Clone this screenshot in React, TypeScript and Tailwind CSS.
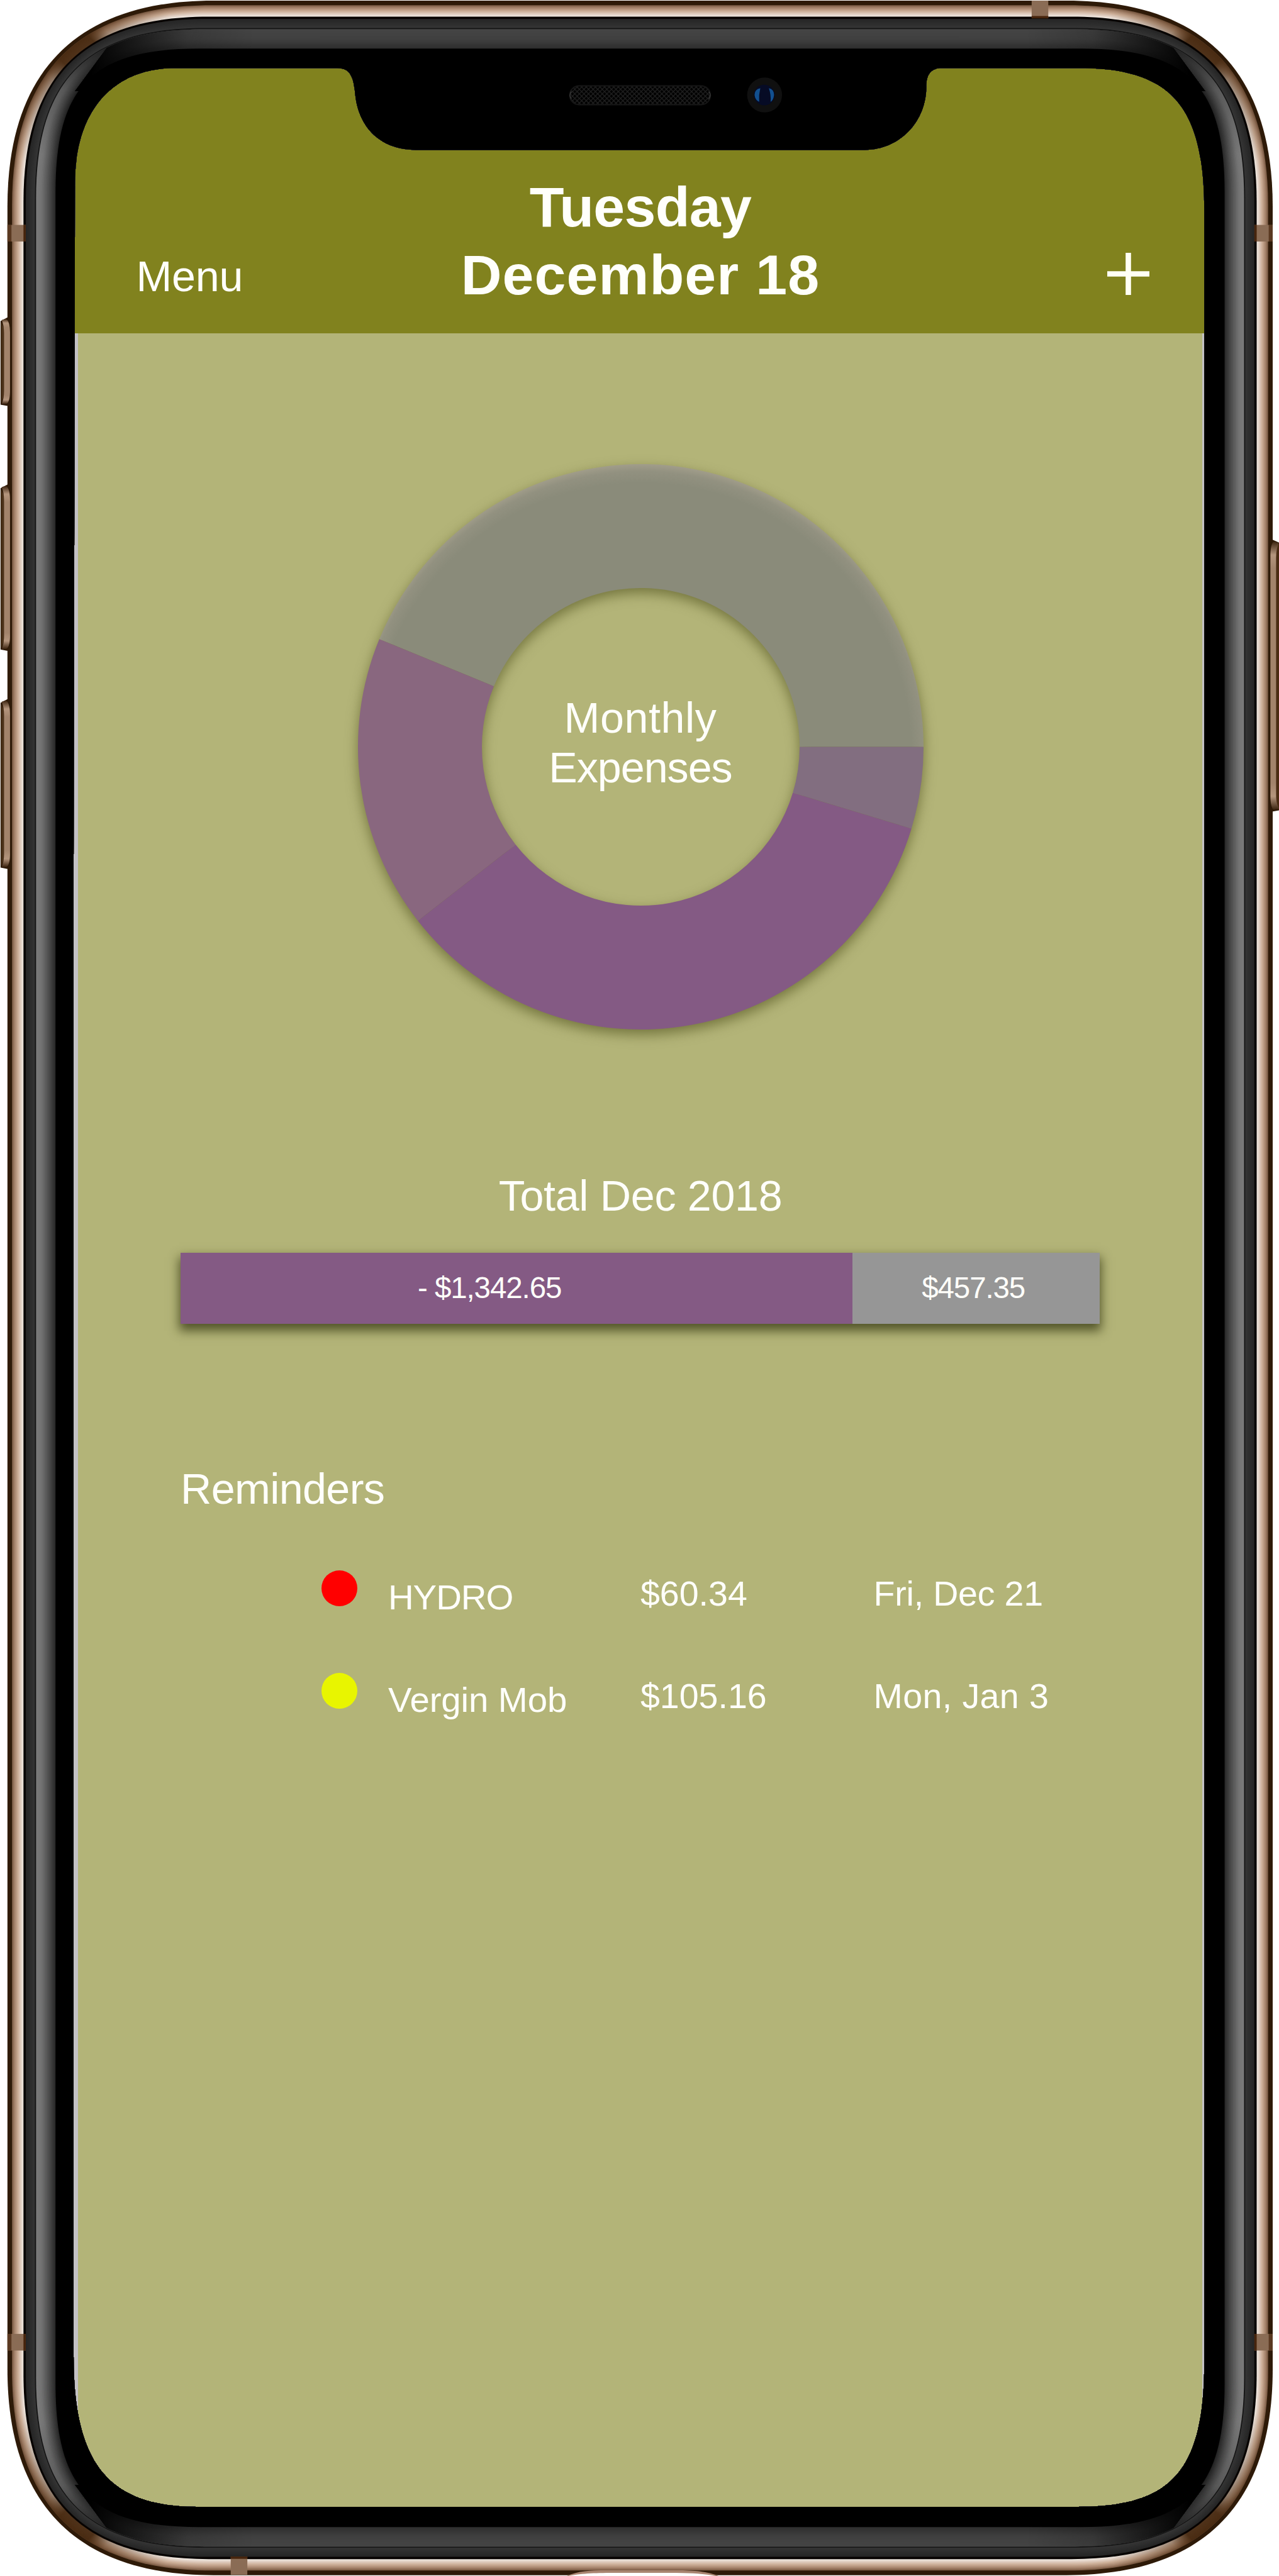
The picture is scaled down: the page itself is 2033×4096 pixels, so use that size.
import React from "react";

const FONT = "font-['Liberation_Sans',Arial,sans-serif]";

/* ---------- device frame geometry (drawn on a 2234 x 4501 canvas) ---------- */

const BOX = { l: 13, t: 1, r: 2223, b: 4499.5 };

function shell(d: number): string {
  const l = BOX.l + d;
  const t = BOX.t + d;
  const r = BOX.r - d;
  const b = BOX.b - d;
  const R = 360 - 1.3 * d;
  const k = (8 * (91 - 0.42 * d) - R) / 3;
  return (
    `M${l},${t + R} C${l},${t + k} ${l + k},${t} ${l + R},${t} ` +
    `H${r - R} C${r - k},${t} ${r},${t + k} ${r},${t + R} ` +
    `V${b - R} C${r},${b - k} ${r - k},${b} ${r - R},${b} ` +
    `H${l + R} C${l + k},${b} ${l},${b - k} ${l},${b - R} Z`
  );
}

type Stop = [number, number, number, number];

function ramp(stops: Stop[], step: number) {
  const out: { d: number; fill: string }[] = [];
  const end = stops[stops.length - 1][0];
  for (let d = stops[0][0]; d <= end; d += step) {
    let i = 0;
    while (i < stops.length - 2 && d > stops[i + 1][0]) i++;
    const a = stops[i];
    const b = stops[i + 1];
    const f = (d - a[0]) / (b[0] - a[0]);
    const c = [1, 2, 3].map((n) => Math.round(a[n] + (b[n] - a[n]) * f));
    out.push({ d, fill: `rgb(${c[0]},${c[1]},${c[2]})` });
  }
  return out;
}

const GOLD = ramp(
  [
    [8, 124, 92, 70],
    [12, 164, 130, 106],
    [18, 204, 174, 151],
    [23, 224, 206, 193],
    [27, 238, 231, 224],
  ],
  1,
);
const DARK = ramp(
  [
    [32, 38, 38, 38],
    [46, 52, 52, 52],
  ],
  2,
);
const SIDE = ramp(
  [
    [50, 122, 122, 122],
    [58, 116, 116, 116],
    [70, 82, 82, 82],
    [83, 40, 40, 40],
  ],
  1.5,
);
const CAP = ramp(
  [
    [50, 68, 68, 68],
    [66, 64, 64, 64],
    [83, 46, 46, 46],
  ],
  2,
);

const SCREEN =
  "M131,321 C131,190 200,119 306,119 H589 C612,119 617,135 620,160 C624,218 660,262 727,262 " +
  "H1510 C1572,262 1618,212 1618,152 C1618,130 1626,119 1645,119 H1886 C2050,119 2103.5,190 2103.5,370 " +
  "V4126 C2103.5,4320 2045,4380 1883,4380 H344 C196,4380 128.6,4312 128.6,4118 V1500 Z";

const CORNERS = [
  { id: "tl", x1: 13, y1: 340, x2: 366, y2: 0 },
  { id: "tr", x1: 2223, y1: 340, x2: 1870, y2: 0 },
  { id: "bl", x1: 13, y1: 4160, x2: 366, y2: 4500 },
  { id: "br", x1: 2223, y1: 4160, x2: 1870, y2: 4500 },
];
const QUADS = [
  { id: "tl", x: 0, y: 0 },
  { id: "tr", x: 1834, y: 0 },
  { id: "bl", x: 0, y: 4101 },
  { id: "br", x: 1834, y: 4101 },
];

function SideButton({ y, h }: { y: number; h: number }) {
  const e = y + h;
  return (
    <g>
      <path d={`M1,${y + 7} L14,${y} H20 V${e} H12 L1,${e - 2} Z`} fill="#2e1a08" />
      <path d={`M2,${y + 9} L7,${y + 20} V${e - 18} L2,${e - 4} Z`} fill="#4a3018" />
      <path
        d={`M3,${y + 5} L10,${y + 3} Q17,${y + 6} 17.5,${y + 26} V${e - 24} Q17,${e - 6} 11,${e - 3} L3,${e - 3} Q7,${e - 12} 7,${e - 26} V${y + 28} Q7,${y + 14} 3,${y + 5} Z`}
        fill="url(#btn)"
      />
    </g>
  );
}

function PhoneFrame() {
  return (
    <svg
      viewBox="0 0 2234 4501"
      preserveAspectRatio="none"
      className="pointer-events-none absolute inset-0 h-full w-full"
      aria-hidden="true"
    >
      <defs>
        <clipPath id="hole">
          <path clipRule="evenodd" d={`M0,0 H2234 V4501 H0 Z ${SCREEN}`} />
        </clipPath>
        <clipPath id="capTop">
          <path d="M212,48 L130,160 H2106 L2024,48 Z" />
        </clipPath>
        <clipPath id="capBottom">
          <path d="M212,4453 L130,4341 H2106 L2024,4453 Z" />
        </clipPath>
        {CORNERS.map((c) => (
          <linearGradient key={c.id} id={`g-${c.id}`} gradientUnits="userSpaceOnUse" x1={c.x1} y1={c.y1} x2={c.x2} y2={c.y2}>
            <stop offset="0.12" stopColor="#46280f" stopOpacity="0" />
            <stop offset="0.4" stopColor="#46280f" stopOpacity="0.55" />
            <stop offset="0.47" stopColor="#46280f" stopOpacity="0.95" />
            <stop offset="0.6" stopColor="#46280f" stopOpacity="0.95" />
            <stop offset="0.66" stopColor="#5a381c" stopOpacity="0.5" />
            <stop offset="0.86" stopColor="#5a381c" stopOpacity="0" />
          </linearGradient>
        ))}
        <linearGradient id="capShade" gradientUnits="userSpaceOnUse" x1="130" y1="0" x2="2106" y2="0">
          <stop offset="0.015" stopColor="#000" />
          <stop offset="0.1" stopColor="#000" stopOpacity="0.15" />
          <stop offset="0.16" stopColor="#000" stopOpacity="0" />
          <stop offset="0.84" stopColor="#000" stopOpacity="0" />
          <stop offset="0.9" stopColor="#000" stopOpacity="0.15" />
          <stop offset="0.985" stopColor="#000" />
        </linearGradient>
        <linearGradient id="sideShade" gradientUnits="userSpaceOnUse" x1="0" y1="0" x2="0" y2="4501">
          <stop offset="0.018" stopColor="#000" stopOpacity="0.75" />
          <stop offset="0.035" stopColor="#000" stopOpacity="0.25" />
          <stop offset="0.06" stopColor="#000" stopOpacity="0" />
          <stop offset="0.94" stopColor="#000" stopOpacity="0" />
          <stop offset="0.965" stopColor="#000" stopOpacity="0.25" />
          <stop offset="0.982" stopColor="#000" stopOpacity="0.75" />
        </linearGradient>
        <linearGradient id="btn" x1="0" y1="0" x2="0" y2="1">
          <stop offset="0" stopColor="#3b230f" />
          <stop offset="0.05" stopColor="#b4957d" />
          <stop offset="0.1" stopColor="#a2836b" />
          <stop offset="0.9" stopColor="#a2836b" />
          <stop offset="0.95" stopColor="#b4957d" />
          <stop offset="1" stopColor="#3b230f" />
        </linearGradient>
        <pattern id="mesh" width="8" height="8" patternUnits="userSpaceOnUse">
          <path d="M0,0 L8,8 M8,0 L0,8" stroke="#222222" strokeWidth="1.400" />
        </pattern>
      </defs>

      <g clipPath="url(#hole)">
        <path d={shell(0)} fill="#2e1a08" />
        {GOLD.map((l) => (
          <path key={l.d} d={shell(l.d)} fill={l.fill} />
        ))}
        {QUADS.map((q) => (
          <svg key={q.id} x={q.x} y={q.y} width="400" height="400" viewBox={`${q.x} ${q.y} 400 400`}>
            <path d={shell(8)} fill={`url(#g-${q.id})`} />
          </svg>
        ))}
        <path d={shell(28)} fill="#070301" />
        {DARK.map((l) => (
          <path key={l.d} d={shell(l.d)} fill={l.fill} />
        ))}
        <path d={shell(48)} fill="#141414" />
        {SIDE.map((l) => (
          <path key={l.d} d={shell(l.d)} fill={l.fill} />
        ))}
        <path d={shell(50)} fill="url(#sideShade)" />
        <g clipPath="url(#capTop)">
          {CAP.map((l) => (
            <path key={l.d} d={shell(l.d)} fill={l.fill} />
          ))}
          <path d={shell(50)} fill="url(#capShade)" />
        </g>
        <g clipPath="url(#capBottom)">
          {CAP.map((l) => (
            <path key={l.d} d={shell(l.d)} fill={l.fill} />
          ))}
          <path d={shell(50)} fill="url(#capShade)" />
        </g>
        <path d={shell(84)} fill="#000" />
      </g>

      {/* antenna bands */}
      <g fill="#8a6c55">
        <rect x="13" y="393" width="32" height="29" />
        <rect x="2191" y="393" width="32" height="29" />
        <rect x="13" y="4078" width="32" height="29" />
        <rect x="2191" y="4078" width="32" height="29" />
        <rect x="1802" y="1" width="29" height="31" />
        <rect x="403" y="4467" width="29" height="32" />
      </g>
      <g fill="#46240c">
        <rect x="13" y="393" width="7" height="29" opacity="0.7" />
        <rect x="2216" y="393" width="7" height="29" opacity="0.7" />
        <rect x="13" y="4078" width="7" height="29" opacity="0.7" />
        <rect x="2216" y="4078" width="7" height="29" opacity="0.7" />
        <rect x="41" y="393" width="4" height="29" />
        <rect x="2191" y="393" width="4" height="29" />
        <rect x="41" y="4078" width="4" height="29" />
        <rect x="2191" y="4078" width="4" height="29" />
        <rect x="1802" y="28" width="29" height="4" />
        <rect x="403" y="4467" width="29" height="4" />
      </g>

      {/* connector lip */}
      <path d="M990,4501 C1010,4492 1030,4491 1060,4491 H1180 C1215,4491 1235,4493 1255,4501 Z" fill="#a98570" />
      <path d="M992,4501 C1020,4496 1040,4495.500 1080,4495.500 H1180 C1210,4496 1230,4497 1250,4501 Z" fill="#ffffff" />

      {/* hardware buttons */}
      <SideButton y={554} h={155} />
      <SideButton y={846} h={291} />
      <SideButton y={1221} h={297} />
      <g>
        <path d="M2218,950 L2223,943 L2234,948 V1416 L2222,1418 L2218,1412 Z" fill="#2e1a08" />
        <path d="M2229,950 H2234 V1414 H2229 Z" fill="#4a2b12" />
        <path
          d="M2219,972 Q2219,950 2225,946 L2234,949 Q2229,958 2229,974 V1388 Q2229,1406 2234,1412 L2225,1415 Q2219,1412 2219,1390 Z"
          fill="url(#btn)"
        />
      </g>

      {/* earpiece and camera */}
      <rect x="995" y="150" width="246" height="33" rx="16.500" fill="url(#mesh)" stroke="#161616" strokeWidth="2" />
      <path d="M998,160 Q993,166 998,173 M1238,160 Q1243,166 1238,173" fill="none" stroke="#3c3c3c" strokeWidth="1.500" />
      <circle cx="1335.500" cy="166" r="30.500" fill="#101010" />
      <circle cx="1335" cy="166" r="18" fill="#060b25" />
      <path d="M1328,154 Q1318,156 1318,166 Q1319,175 1326,178 Q1325,166 1328,154 Z" fill="#12508f" />
      <path d="M1343,154 Q1352,156 1352,166 Q1351,175 1346,178 Q1347,166 1343,154 Z" fill="#12508f" />
    </svg>
  );
}

/* ------------------------------- donut chart ------------------------------- */

const OUTER = 494;
const INNER = 277.5;

function slice(from: number, to: number): string {
  const p = (r: number, a: number) => {
    const rad = (a * Math.PI) / 180;
    return `${(r * Math.cos(rad)).toFixed(2)},${(r * Math.sin(rad)).toFixed(2)}`;
  };
  return `M${p(OUTER, from)} A${OUTER},${OUTER} 0 0 1 ${p(OUTER, to)} L${p(INNER, to)} A${INNER},${INNER} 0 0 0 ${p(INNER, from)} Z`;
}

const SLICES = [
  { from: 202.4, to: 360, fill: "url(#haze)" },
  { from: 142, to: 202.4, fill: "#89677f" },
  { from: 16.8, to: 142, fill: "#845a84" },
  { from: 0, to: 16.8, fill: "#826e80" },
];

function Donut() {
  return (
    <svg
      viewBox="-494 -494 988 988"
      className="h-[899px] w-[899px] overflow-visible [filter:drop-shadow(0_8px_10px_rgba(70,72,20,0.58))] [grid-area:1/1]"
      aria-hidden="true"
    >
      <defs>
        <radialGradient id="haze" gradientUnits="userSpaceOnUse" cx="0" cy="12" r="506">
          <stop offset="0.935" stopColor="#8a8b7a" />
          <stop offset="0.975" stopColor="#929180" />
          <stop offset="1" stopColor="#a19d8a" />
        </radialGradient>
      </defs>
      {SLICES.map((s) => (
        <path key={s.from} d={slice(s.from, s.to)} fill={s.fill} />
      ))}
    </svg>
  );
}

/* --------------------------------- content --------------------------------- */

const REMINDERS = [
  {
    name: "HYDRO",
    nameTracking: "tracking-[-1.1px]",
    amount: "$60.34",
    due: "Fri, Dec 21",
    dueTracking: "tracking-[-0.2px]",
    dot: "bg-[#ff0000]",
  },
  {
    name: "Vergin Mob",
    nameTracking: "tracking-[-0.1px]",
    amount: "$105.16",
    due: "Mon, Jan 3",
    dueTracking: "tracking-[0.4px]",
    dot: "bg-[#e8f500]",
  },
];

function Header() {
  return (
    <header className="grid h-[425px] grid-cols-[1fr_auto_1fr] items-end bg-[#81821e] pb-[38.600px]">
      <button className="mb-[12.800px] justify-self-start pl-[101.500px] text-[68.2px] leading-[80px] tracking-[-0.2px]">
        Menu
      </button>
      <h1 className="text-center text-[89.7px] leading-[107.5px] font-bold">
        <span className="block tracking-[-0.7px]">Tuesday</span>
        <span className="block tracking-[1.1px]">December 18</span>
      </h1>
      <button className="mr-[94px] mb-[22.600px] justify-self-end" aria-label="Add">
        <svg viewBox="0 0 74 74" className="h-[67px] w-[67px]">
          <path d="M0,37 H74 M37,0 V74" stroke="#fffff4" strokeWidth="9.500" />
        </svg>
      </button>
    </header>
  );
}

export default function App() {
  return (
    <div className={`relative h-[4096px] w-[2033px] overflow-hidden bg-white pt-[105px] text-[#fffffa] ${FONT}`}>
      <main className="ml-[115px] flex w-[1806px] flex-col">
        <Header />
        <div className="h-[3480px] border-r-[10px] border-l-[9px] border-[#c3c1c4] bg-[#b3b478] pr-[162px] pl-[163px]">
          <section className="grid place-items-center pt-[208px]">
            <Donut />
            <p className="pb-[14px] text-center text-[68.2px] leading-[78.6px] [grid-area:1/1]">
              <span className="block tracking-[0.6px]">Monthly</span>
              <span className="block tracking-[-1px]">Expenses</span>
            </p>
          </section>

          <section className="mt-[223.600px]">
            <h2 className="text-center text-[68.2px] leading-[80px] tracking-[-0.3px]">Total Dec 2018</h2>
            <div className="mt-[51px] flex h-[113px] w-[1461px] text-[47.500px] tracking-[-1.1px] shadow-[0_9px_16px_2px_rgba(50,52,15,0.75)]">
              <div className="flex w-[1068.400px] items-center justify-center bg-[#845a84] pr-[86px]">- $1,342.65</div>
              <div className="flex grow items-center justify-center bg-[#969696] pr-[9px]">$457.35</div>
            </div>
          </section>

          <section className="mt-[222.500px]">
            <h2 className="text-[68.2px] leading-[80px] tracking-[-0.6px]">Reminders</h2>
            <ul className="mt-[37.400px] pl-[223.500px]">
              {REMINDERS.map((r) => (
                <li
                  key={r.name}
                  className="grid h-[163px] grid-cols-[106.5px_401px_370.6px_auto] items-center text-[55.500px] leading-[64px] whitespace-nowrap"
                >
                  <span className={`h-[57px] w-[57px] rounded-full ${r.dot}`} />
                  <span className={`pt-[27.600px] text-[56.400px] ${r.nameTracking}`}>{r.name}</span>
                  <span className="pt-[16.600px]">{r.amount}</span>
                  <span className={`pt-[16.600px] ${r.dueTracking}`}>{r.due}</span>
                </li>
              ))}
            </ul>
          </section>
        </div>
      </main>
      <PhoneFrame />
    </div>
  );
}
